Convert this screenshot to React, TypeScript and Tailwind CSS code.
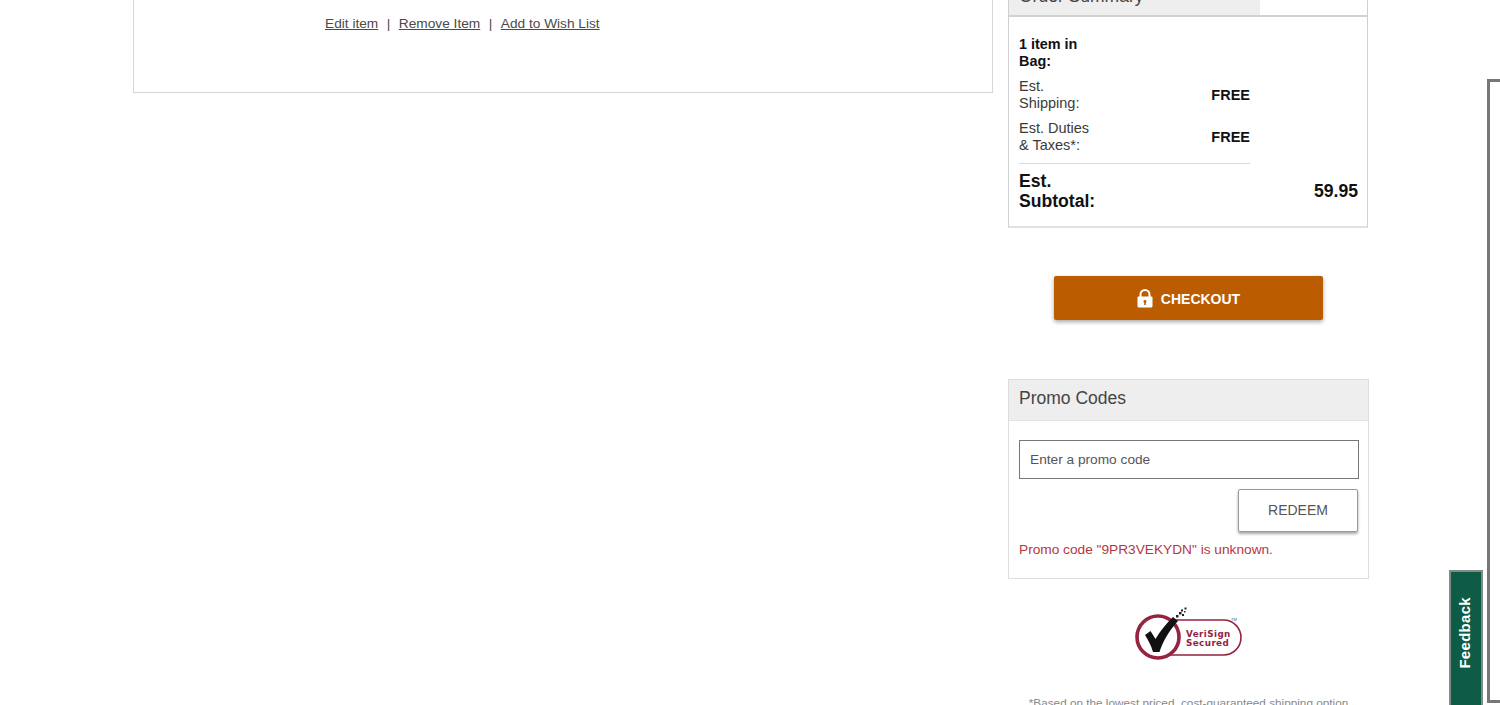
import React from 'react';

const VeriSignSeal = () => (
  <svg width="110" height="56" viewBox="0 0 110 56" fill="none">
    {/* pill behind the seal */}
    <path d="M30 14H89.500a17.500 17.500 0 0 1 0 35H30" stroke="#94243f" strokeWidth="1.600" />
    {/* ring */}
    <circle cx="24" cy="31" r="21" fill="#fff" stroke="#94243f" strokeWidth="3.600" />
    {/* check mark */}
    <path d="M11 29l5.500-4 5 8C26 25 32 18 39 11l5 4C35 25 29 35 25.500 46h-6.500C17 39 14 34 11 29z" fill="#111" />
    {/* speckle */}
    <g fill="#222">
      <rect x="42" y="9" width="2.500" height="2.500" />
      <rect x="45" y="6" width="2.500" height="2.500" />
      <rect x="48" y="8" width="2" height="2" />
      <rect x="47" y="3.500" width="2" height="2" />
      <rect x="50.500" y="1.500" width="2" height="2" />
      <rect x="50" y="5" width="1.500" height="1.500" />
    </g>
    <text x="52" y="31" fontFamily="'DejaVu Sans', sans-serif" fontSize="8.800" fontWeight="700" letterSpacing="0.4" fill="#94243f">VeriSign</text>
    <text x="52" y="40" fontFamily="'DejaVu Sans', sans-serif" fontSize="8.800" fontWeight="700" letterSpacing="0.4" fill="#94243f">Secured</text>
    <text x="97" y="15" fontFamily="'Liberation Sans', sans-serif" fontSize="4" fill="#555">TM</text>
  </svg>
);

const LockIcon = () => (
  <svg width="16" height="19" viewBox="0 0 16 19" fill="none">
    <path d="M3.500 8V5.500a4.500 4.500 0 0 1 9 0V8" stroke="#fff" strokeWidth="2" />
    <path fillRule="evenodd" clipRule="evenodd" d="M1.500 7.500h13a1 1 0 0 1 1 1V17a1.500 1.500 0 0 1-1.500 1.500H2A1.500 1.500 0 0 1 .5 17V8.500a1 1 0 0 1 1-1zM8 11a1.500 1.500 0 0 0-.8 2.800V16h1.600v-2.200A1.500 1.500 0 0 0 8 11z" fill="#fff" />
  </svg>
);

const SummaryRow = ({ label, value }: { label: string; value: string }) => (
  <div className="flex w-[231px] items-center justify-between">
    <span className="w-[80px] text-[14.500px] leading-[17px] text-[#3a3a3a]">{label}</span>
    <span className="pt-px text-[14.500px] font-bold text-[#111]">{value}</span>
  </div>
);

export default function App() {
  return (
    <div className="relative h-[705px] w-[1500px] overflow-hidden bg-white font-['Liberation_Sans',Arial,sans-serif]">
      <div className="-mt-[20px] flex items-start gap-[15px] pl-[133px]">
        {/* bag item */}
        <div className="h-[113px] w-[860px] border border-[#d6d6d6] pl-[191px] pt-[33px]">
          <div className="flex items-center text-[13.700px] leading-[20px] text-[#4a4a4a]">
            <a className="underline">Edit item</a>
            <span className="px-[8.500px]">|</span>
            <a className="underline">Remove Item</a>
            <span className="px-[8.500px]">|</span>
            <a className="underline">Add to Wish List</a>
          </div>
        </div>

        <div className="flex w-[361px] flex-col">
          {/* order summary */}
          <div className="h-[248px] w-[360px] border-x border-b-2 border-x-[#cfcfcf] border-b-[#e2e2e2]">
            <div className="border-b-2 border-[#d2d2d2]">
              <div className="flex h-[35px] w-[251px] items-end bg-[#eeeeee] pl-[10px] text-[17.500px] leading-[20px] text-[#444]">
                <span className="mb-[9px]">Order Summary</span>
              </div>
            </div>
            <div className="flex flex-col pl-[10px] pr-[9px] pt-[19px]">
              <div className="w-[80px] text-[14.400px] font-bold leading-[17px] text-[#111]">1 item in Bag:</div>
              <div className="mt-[8px] flex flex-col gap-[8px]">
                <SummaryRow label="Est. Shipping:" value="FREE" />
                <SummaryRow label="Est. Duties & Taxes*:" value="FREE" />
              </div>
              <div className="mt-[9px] h-px w-[231px] bg-[#d8d8d8]" />
              <div className="mt-[7px] flex items-center justify-between text-[17.600px] font-bold leading-[20px] text-[#111]">
                <span className="w-[80px]">Est. Subtotal:</span>
                <span>59.95</span>
              </div>
            </div>
          </div>

          <button className="ml-[46px] mt-[48px] flex h-[44px] w-[269px] items-center justify-center gap-[8px] rounded-[2px] bg-[#bb5c00] text-[14px] font-bold text-white shadow-[0_2px_4px_rgba(0,0,0,0.35)]">
            <LockIcon />
            <span className="mt-[2px]">CHECKOUT</span>
          </button>

          {/* promo codes */}
          <div className="mt-[59px] h-[200px] w-[361px] border border-[#dddddd]">
            <div className="flex h-[41px] items-center border-b border-[#e4e4e4] bg-[#eeeeee] pb-[3px] pl-[10px] text-[17.500px] text-[#444]">
              Promo Codes
            </div>
            <div className="flex flex-col px-[10px] pt-[19px]">
              <div className="flex h-[39px] w-[340px] items-center border border-[#777777] pl-[10px] pt-[2px] text-[13.700px] text-[#555]">
                Enter a promo code
              </div>
              <div className="mt-[10px] flex justify-end">
                <button className="h-[43px] w-[120px] rounded-[2px] border border-[#999999] bg-white pb-px text-[14px] text-[#555] shadow-[0_2px_3px_rgba(0,0,0,0.35)]">
                  REDEEM
                </button>
              </div>
              <p className="mt-[9px] text-[13.700px] leading-[18px] text-[#b5363f]">Promo code "9PR3VEKYDN" is unknown.</p>
            </div>
          </div>

          <div className="mt-[27px] flex justify-center">
            <VeriSignSeal />
          </div>

          <p className="mt-[33px] whitespace-nowrap text-center text-[11.750px] leading-[16px] text-[#888]">
            *Based on the lowest priced, cost-guaranteed shipping option
          </p>
        </div>
      </div>

      {/* overlays at the right edge of the window */}
      <div className="absolute left-[1449px] top-[570px] flex h-[140px] w-[34px] items-start justify-center border-2 border-[#7f8c87] bg-[#0f5c46] pr-[3px] pt-[25px]">
        <span className="rotate-180 text-[15px] font-bold leading-none tracking-[0.3px] text-white [writing-mode:vertical-rl]">Feedback</span>
      </div>
      <div className="absolute left-[1487px] top-[79px] h-[624px] w-[30px] border-[3px] border-[#777777]" />
    </div>
  );
}
